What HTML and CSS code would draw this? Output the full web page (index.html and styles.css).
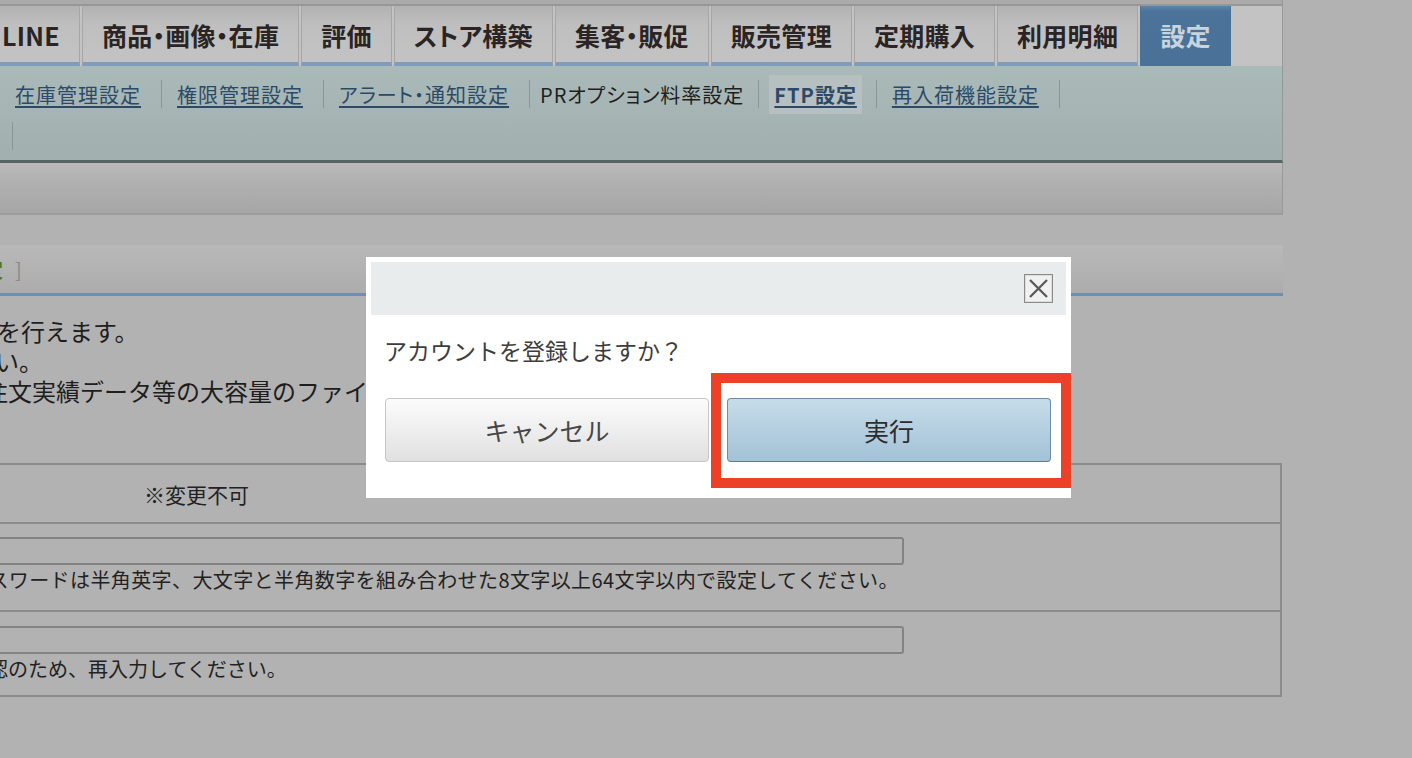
FILE: index.html
```html
<!DOCTYPE html>
<html lang="ja">
<head>
<meta charset="utf-8">
<title>FTP設定</title>
<link rel="stylesheet" href="styles.css">
</head>
<body>
<div class="page">
  <div class="topband"></div>
  <nav class="tabs">
    <a class="tab tab--cut">LINE</a>
    <a class="tab">商品・画像・在庫</a>
    <a class="tab">評価</a>
    <a class="tab">ストア構築</a>
    <a class="tab">集客・販促</a>
    <a class="tab">販売管理</a>
    <a class="tab">定期購入</a>
    <a class="tab">利用明細</a>
    <a class="tab tab--active">設定</a>
  </nav>
  <div class="subnav">
    <div class="subnav-row">
      <span class="subnav-item"><a class="subnav-link">在庫管理設定</a></span>
      <span class="subnav-item"><a class="subnav-link">権限管理設定</a></span>
      <span class="subnav-item"><a class="subnav-link">アラート・通知設定</a></span>
      <span class="subnav-item subnav-item--plain">PRオプション料率設定</span>
      <span class="subnav-item subnav-item--current"><a class="subnav-link subnav-current">FTP設定</a></span>
      <span class="subnav-item"><a class="subnav-link">再入荷機能設定</a></span>
    </div>
    <div class="subnav-row">
      <span class="subnav-item subnav-item--empty"></span>
    </div>
  </div>
  <div class="toolbar"></div>
  <div class="section-head"><span class="crumb-link">定</span><span class="crumb-bracket">]</span></div>
  <div class="intro">
    <div class="intro-line intro-line--a">を行えます。</div>
    <div class="intro-line intro-line--b">い。</div>
    <div class="intro-line intro-line--c">注文実績データ等の大容量のファイルをアップロードできます。</div>
  </div>
  <div class="form-table">
    <div class="form-row form-row--id"><span>※変更不可</span></div>
    <div class="form-row form-row--pw">
      <input class="field" type="password">
      <div class="note note--rule">パスワードは半角英字、大文字と半角数字を組み合わせた8文字以上64文字以内で設定してください。</div>
    </div>
    <div class="form-row form-row--pw2">
      <input class="field" type="password">
      <div class="note">確認のため、再入力してください。</div>
    </div>
  </div>
</div>

<div class="modal" role="dialog">
  <div class="modal-head">
    <button class="modal-close" type="button" aria-label="閉じる">
      <svg width="21" height="21" viewBox="0 0 21 21"><path d="M2 2 L19 19 M19 2 L2 19" stroke="#5a5a5a" stroke-width="2.3" fill="none"/></svg>
    </button>
  </div>
  <div class="modal-body">
    <div class="modal-msg">アカウントを登録しますか？</div>
    <div class="modal-actions">
      <button class="btn btn--cancel" type="button">キャンセル</button>
      <button class="btn btn--run" type="button">実行</button>
    </div>
  </div>
</div>
<div class="highlight"></div>
</body>
</html>
```

FILE: styles.css
```css
* { box-sizing: border-box; }
html, body { margin: 0; height: 100%; }
body {
  background: #b2b2b2;
  font-family: "Noto Sans CJK JP", "Noto Sans", sans-serif;
  color: #1e1e1e;
  overflow: hidden;
}
.page {
  width: 1283px;
  overflow: hidden;
}
.topband {
  height: 6px;
  background: #aaaaaa;
  border-bottom: 2px solid #979797;
  border-right: 1px solid #999;
}
.tabs {
  display: flex;
  gap: 2px;
  height: 60px;
  background: #c3c3c3;
  border-right: 1px solid #999;
  font-feature-settings: "palt";
}
.tab {
  display: flex;
  align-items: center;
  padding: 2px 19px 0;
  font-size: 25px;
  font-weight: 700;
  letter-spacing: 0.28px;
  color: #2a2424;
  background: linear-gradient(#b2b2b2, #bfbfbf 35%, #c3c3c3);
  border-left: 1px solid #a6a6a6;
  border-right: 1px solid #a6a6a6;
  border-bottom: 4px solid #7f9dba;
  white-space: nowrap;
}
.tab--cut { margin-left: -18px; }
.tab--active {
  background: linear-gradient(#5a86ad, #4b7399 10%, #4a7298);
  color: #c8d5df;
  border-color: #4a7298;
}
.subnav {
  height: 97px;
  padding-top: 14px;
  background: linear-gradient(#aabab9, #a1afaf);
  border-bottom: 3px solid #586363;
  border-right: 1px solid #8e9a9a;
  font-feature-settings: "palt";
}
.subnav-row {
  display: flex;
  height: 28px;
  margin-bottom: 14px;
}
.subnav-item {
  display: flex;
  align-items: center;
  height: 28px;
  padding: 0 20px 0 15px;
  border-right: 1px solid #889797;
  font-size: 20px;
  letter-spacing: 1px;
  white-space: nowrap;
}
.subnav-item--plain { color: #1f1f1f; padding: 0 14px 0 10px; }
.subnav-item--current { padding: 0 14px 0 10px; }
.subnav-item--empty { width: 13px; padding: 0; }
.subnav-link {
  color: #2c4a68;
  text-decoration: underline;
  text-underline-offset: 3px;
}
.subnav-current {
  display: flex;
  align-items: center;
  height: 39px;
  padding: 0 5px;
  background: #b6c0c1;
  font-weight: 700;
}
.toolbar {
  height: 52px;
  background: linear-gradient(#bababa, #b2b2b2 30%, #a6a6a6);
  border-bottom: 2px solid #9b9b9b;
  border-right: 1px solid #999;
}
.section-head {
  display: flex;
  align-items: center;
  gap: 12px;
  height: 51px;
  margin-top: 30px;
  background: linear-gradient(#b9b9b9, #acacac);
  border-bottom: 3px solid #6e8fb0;
  font-size: 20px;
}
.crumb-link { color: #4e7826; margin-left: -17px; font-weight: 700; }
.crumb-bracket { color: #8a8a8a; }
.intro {
  margin-top: 20px;
  font-size: 24px;
  line-height: 30px;
  color: #1e1e1e;
  white-space: nowrap;
}
.intro-line--a { margin-left: -3px; }
.intro-line--b { margin-left: -5px; }
.intro-line--c { margin-left: -16px; }
.form-table {
  width: 1326px;
  margin-left: -44px;
  margin-top: 57px;
  border: 2px solid #8b8b8b;
}
.form-row { border-top: 2px solid #8b8b8b; padding-left: 10px; }
.form-row:first-child { border-top: 0; }
.form-row--id {
  display: flex;
  align-items: center;
  height: 57px;
  padding-left: 186px;
  font-size: 21px;
  color: #222;
}
.form-row--pw { height: 88px; padding-top: 13px; }
.form-row--pw2 { height: 85px; padding-top: 14px; }
.field {
  display: block;
  width: 936px;
  height: 28px;
  margin: 0;
  border: 2px solid #838383;
  border-radius: 3px;
  background: transparent;
}
.note {
  font-size: 20px;
  line-height: 30px;
  color: #222;
  white-space: nowrap;
}
.note--rule { letter-spacing: 0.4px; }
.modal {
  position: fixed;
  left: 366px;
  top: 257px;
  width: 705px;
  height: 241px;
  padding: 5px;
  background: #fff;
}
.modal-head {
  display: flex;
  justify-content: flex-end;
  align-items: center;
  height: 53px;
  padding-right: 13px;
  background: #e9ecec;
}
.modal-close {
  display: flex;
  align-items: center;
  justify-content: center;
  width: 29px;
  height: 29px;
  padding: 0;
  border: 1px solid #8b8b8b;
  background: #f1f1f1;
  box-shadow: inset 0 0 0 1px #dcdcdc;
}
.modal-body { padding: 17px 15px 0 13px; }
.modal-msg {
  font-size: 23px;
  line-height: 36px;
  color: #3d3d3d;
}
.modal-actions {
  display: flex;
  gap: 18px;
  margin-top: 30px;
  padding-left: 1px;
}
.btn {
  width: 324px;
  height: 64px;
  border-radius: 4px;
  font-family: inherit;
  font-size: 25px;
  cursor: pointer;
}
.btn--cancel {
  border: 1px solid #c6c6c6;
  background: linear-gradient(#fcfcfc, #e0e0e0);
  color: #474747;
}
.btn--run {
  border: 1px solid #6e8ca8;
  border-bottom-color: #5c7b97;
  background: linear-gradient(#c6dcea, #a3c2d6);
  color: #2c2c2c;
}
.highlight {
  position: fixed;
  left: 711px;
  top: 373px;
  width: 360px;
  height: 115px;
  border: 10px solid #ec4027;
  pointer-events: none;
}
```
